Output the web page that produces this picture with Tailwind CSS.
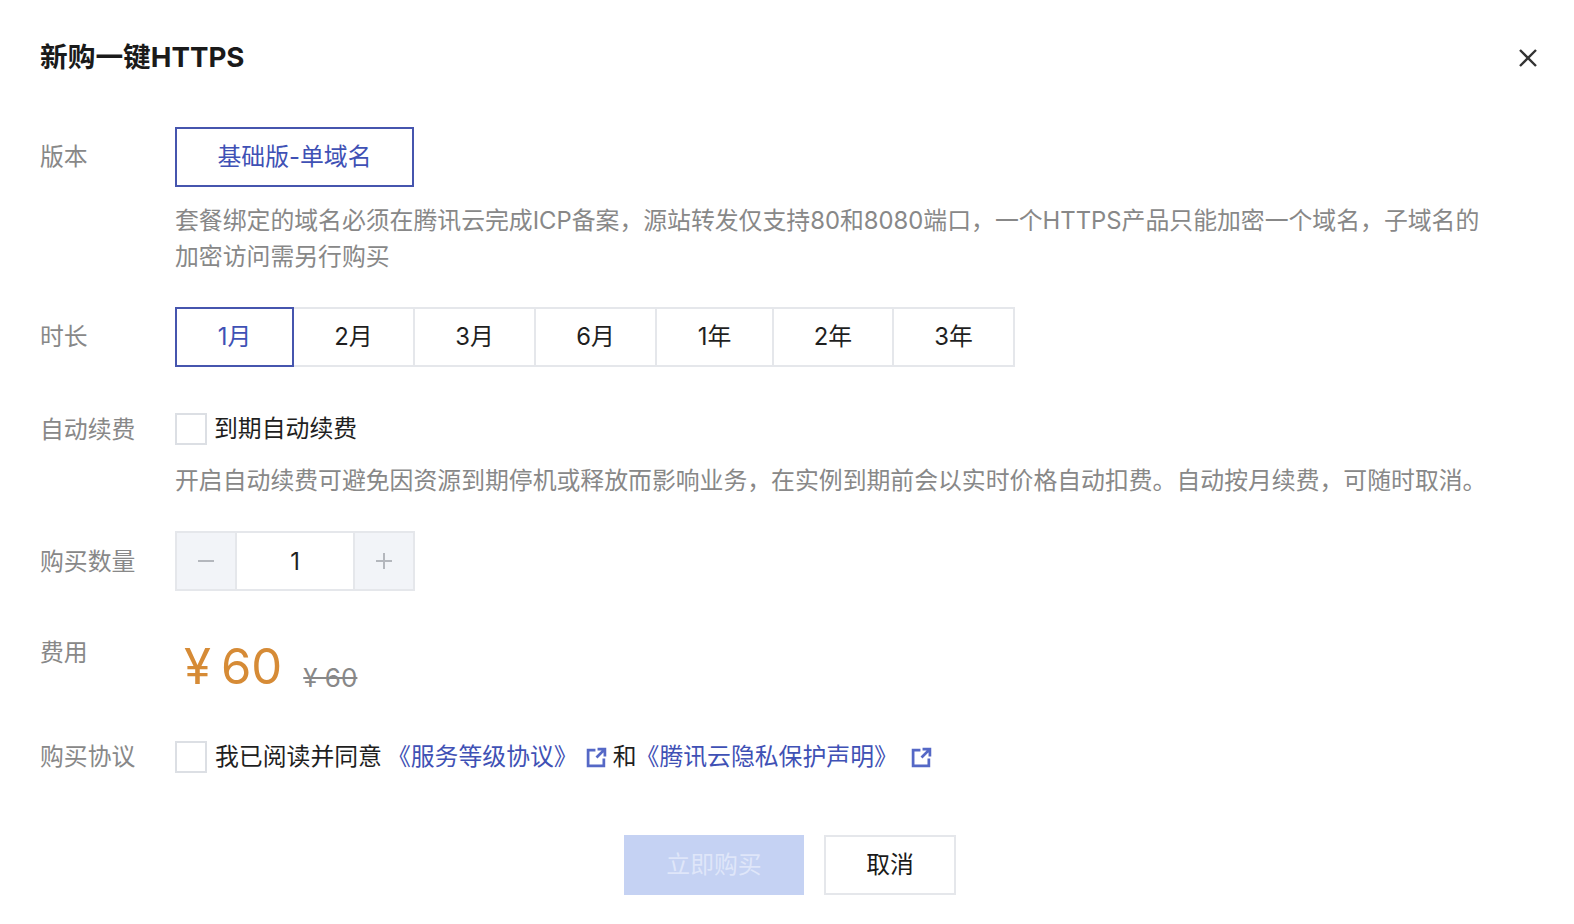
<!DOCTYPE html>
<html lang="zh-CN">
  <head>
    <meta charset="UTF-8" />
    <title>新购一键HTTPS</title>
    <script src="https://cdn.jsdelivr.net/npm/@tailwindcss/browser@4"></script>
  </head>
  <body class="bg-white">
    <div class="relative w-[1574px] h-[924px] overflow-hidden pl-[40px] pt-[38px] font-['Inter','Noto_Sans_CJK_SC',sans-serif] text-[23.85px] text-[#1f1f1f]">
      <h1 class="h-[38px] leading-[38px] text-[27.7px] font-bold text-[#1a1a1a]">新购一键HTTPS</h1>
      <button class="absolute left-[1516px] top-[46px] w-[24px] h-[24px]">
        <svg viewBox="0 0 24 24" class="w-[24px] h-[24px]" fill="none" stroke="#333" stroke-width="2.4"><path d="M4 4l16 16M20 4L4 20" /></svg>
      </button>

      <!-- 版本 -->
      <div class="flex mt-[51px]">
        <div class="w-[135px] pt-[12px] leading-[36px] text-[#888]">版本</div>
        <div>
          <div class="w-[239px] h-[60px] border-2 border-[#4655ae] flex items-center justify-center text-[#3f51b5]">基础版-单域名</div>
          <p class="w-[1320px] mt-[16px] leading-[36px] text-[#888]">套餐绑定的域名必须在腾讯云完成ICP备案，源站转发仅支持80和8080端口，一个HTTPS产品只能加密一个域名，子域名的加密访问需另行购买</p>
        </div>
      </div>

      <!-- 时长 -->
      <div class="flex mt-[32px]">
        <div class="w-[135px] pt-[12px] leading-[36px] text-[#888]">时长</div>
        <div class="flex h-[60px]">
          <div class="w-[119px] border-2 border-[#4655ae] flex items-center justify-center text-[#3f51b5]">1月</div>
          <div class="w-[121px] border-2 border-l-0 border-[#e5e7eb] flex items-center justify-center">2月</div>
          <div class="w-[121px] border-2 border-l-0 border-[#e5e7eb] flex items-center justify-center">3月</div>
          <div class="w-[121px] border-2 border-l-0 border-[#e5e7eb] flex items-center justify-center">6月</div>
          <div class="w-[117px] border-2 border-l-0 border-[#e5e7eb] flex items-center justify-center">1年</div>
          <div class="w-[120px] border-2 border-l-0 border-[#e5e7eb] flex items-center justify-center">2年</div>
          <div class="w-[121px] border-2 border-l-0 border-[#e5e7eb] flex items-center justify-center">3年</div>
        </div>
      </div>

      <!-- 自动续费 -->
      <div class="flex mt-[44px]">
        <div class="w-[135px] leading-[38px] text-[#888]">自动续费</div>
        <div>
          <div class="flex items-center h-[36px]">
            <span class="w-[32px] h-[32px] border-2 border-[#dcdfe4]"></span>
            <span class="ml-[7px] leading-[38px]">到期自动续费</span>
          </div>
          <p class="mt-[16px] leading-[36px] text-[#888] whitespace-nowrap">开启自动续费可避免因资源到期停机或释放而影响业务，在实例到期前会以实时价格自动扣费。自动按月续费，可随时取消。</p>
        </div>
      </div>

      <!-- 购买数量 -->
      <div class="flex mt-[32px]">
        <div class="w-[135px] pt-[13px] leading-[36px] text-[#888]">购买数量</div>
        <div class="flex h-[60px] w-[240px] border-2 border-[#e5e7eb]">
          <div class="w-[60px] bg-[#f2f4f8] border-r-2 border-[#e5e7eb] flex items-center justify-center">
            <svg viewBox="0 0 18 18" class="w-[18px] h-[18px]" stroke="#b4b7bd" stroke-width="2"><path d="M1 9h16" /></svg>
          </div>
          <div class="flex-1 flex items-center justify-center pt-[2px]">1</div>
          <div class="w-[60px] bg-[#f2f4f8] border-l-2 border-[#e5e7eb] flex items-center justify-center">
            <svg viewBox="0 0 18 18" class="w-[18px] h-[18px]" stroke="#b4b7bd" stroke-width="2"><path d="M1 9h16M9 1v16" /></svg>
          </div>
        </div>
      </div>

      <!-- 费用 -->
      <div class="flex mt-[44px] h-[72px]">
        <div class="w-[135px] leading-[36px] text-[#888]">费用</div>
        <div class="flex items-end pl-[9px] h-[64px]">
          <span class="text-[49px] leading-[64px] text-[#d68b36]">¥</span>
          <span class="text-[49px] leading-[64px] text-[#d68b36] ml-[10px]">60</span>
          <span class="ml-[21px] mb-[3px] text-[26px] leading-[36px] line-through text-[#888] whitespace-pre">¥ 60</span>
        </div>
      </div>

      <!-- 购买协议 -->
      <div class="flex mt-[32px] items-center h-[36px]">
        <div class="w-[135px] leading-[36px] text-[#888]">购买协议</div>
        <span class="w-[32px] h-[32px] border-2 border-[#dcdfe4]"></span>
        <span class="ml-[8px]">我已阅读并同意</span>
        <span class="ml-[5px] text-[#3f51b5]">《服务等级协议》</span>
        <svg viewBox="0 0 20 20" class="ml-[8px] w-[21px] h-[21px]" fill="none" stroke="#5568c6" stroke-width="2.6"><path d="M9 3H2v15h15v-7M11 2h7v7M18 2l-8 8" /></svg>
        <span class="ml-[6px]">和</span>
        <span class="ml-[-1px] text-[#3f51b5]">《腾讯云隐私保护声明》</span>
        <svg viewBox="0 0 20 20" class="ml-[13px] w-[21px] h-[21px]" fill="none" stroke="#5568c6" stroke-width="2.6"><path d="M9 3H2v15h15v-7M11 2h7v7M18 2l-8 8" /></svg>
      </div>

      <!-- 按钮 -->
      <div class="flex mt-[60px] pl-[584px] gap-[20px]">
        <button class="w-[180px] h-[60px] bg-[#c5d2f3] text-[#dfe6f9]">立即购买</button>
        <button class="w-[132px] h-[60px] border-2 border-[#e5e7eb] text-[#1a1a1a]">取消</button>
      </div>
    </div>
  </body>
</html>
